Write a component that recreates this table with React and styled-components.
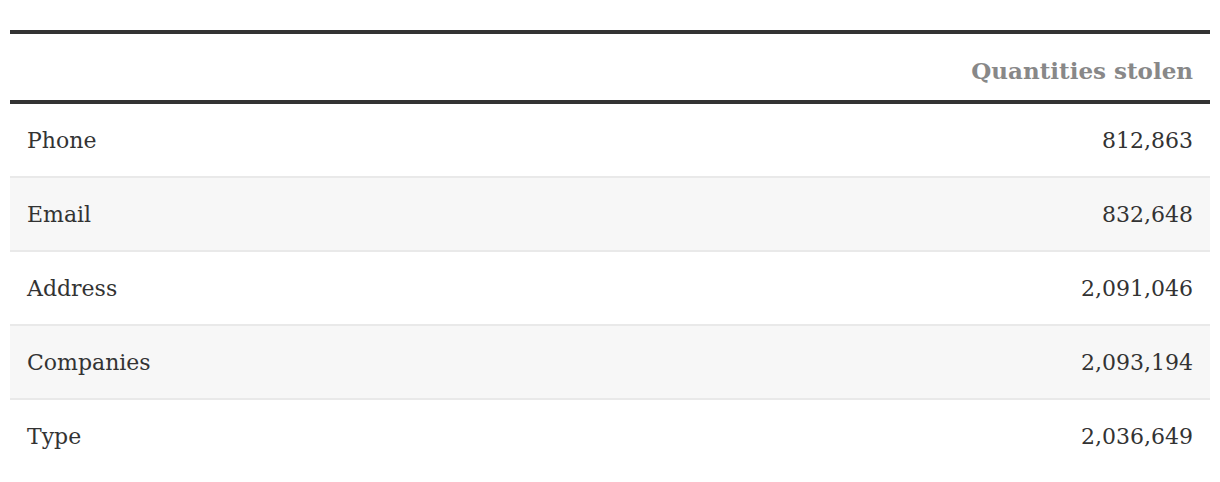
import React from "react";
import styled, { createGlobalStyle } from "styled-components";

const rows = [
  { label: "Phone", value: "812,863" },
  { label: "Email", value: "832,648" },
  { label: "Address", value: "2,091,046" },
  { label: "Companies", value: "2,093,194" },
  { label: "Type", value: "2,036,649" }
];

export default function App() {
  return (
    <Page>
      <GlobalStyle />
      <Table>
        <thead>
          <tr>
            <HeadCell />
            <HeadCell align="right">Quantities stolen</HeadCell>
          </tr>
        </thead>
        <tbody>
          {rows.map((r, i) => (
            <Row key={r.label} striped={i % 2 === 1}>
              <Cell>{r.label}</Cell>
              <Cell align="right">{r.value}</Cell>
            </Row>
          ))}
        </tbody>
      </Table>
    </Page>
  );
}

const GlobalStyle = createGlobalStyle`
  body {
    margin: 0;
    background: #fff;
  }
`;

//Page wrapper
const Page = styled.div`
  padding: 30px 10px;
  font-family: "DejaVu Serif", "Liberation Serif", serif;
`;

//Table
const Table = styled.table`
  width: 100%;
  border-collapse: collapse;
  border-top: 4px solid #333;
`;

//Header cell
const HeadCell = styled.th`
  height: 60px;
  padding: 6px 17px 0;
  text-align: ${(p) => p.align || "left"};
  vertical-align: middle;
  font-size: 23px;
  font-weight: 700;
  color: #888;
  border-bottom: 4px solid #333;
`;

//Body row
const Row = styled.tr`
  background: ${(p) => (p.striped ? "#f7f7f7" : "#fff")};
  border-bottom: 2px solid #e9e9e9;
  &:last-child {
    border-bottom: none;
  }
`;

//Body cell
const Cell = styled.td`
  height: 72px;
  padding: 0 17px;
  text-align: ${(p) => p.align || "left"};
  vertical-align: middle;
  font-size: 22px;
  color: #333;
`;
